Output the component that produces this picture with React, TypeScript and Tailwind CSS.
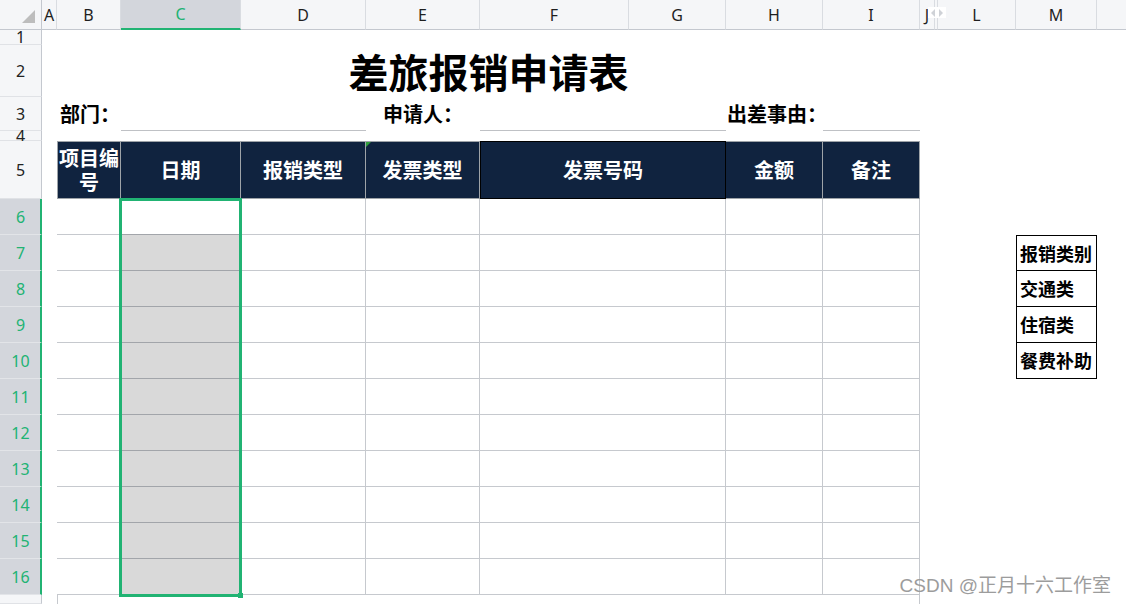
import clsx from "clsx";

const CJK = "font-['Noto_Sans_CJK_SC',sans-serif]";

const headerCols = [
  { l: "A", w: "w-[15px]" },
  { l: "B", w: "w-[64px]" },
  { l: "C", w: "w-[120px]", sel: true },
  { l: "D", w: "w-[125px]" },
  { l: "E", w: "w-[114px]" },
  { l: "F", w: "w-[149px]" },
  { l: "G", w: "w-[97px]" },
  { l: "H", w: "w-[97px]" },
  { l: "I", w: "w-[97px]" },
  { l: "J", w: "w-[15px]" },
  { l: "", w: "w-[3px]" },
  { l: "L", w: "w-[78px]" },
  { l: "M", w: "w-[81px]" },
];

const tableHead = [
  { t: "日期", w: "w-[120px]" },
  { t: "报销类型", w: "w-[125px]" },
  { t: "发票类型", w: "w-[114px]", mark: true },
];

const categories: Record<number, string> = {
  7: "报销类别",
  8: "交通类",
  9: "住宿类",
  10: "餐费补助",
};

function RowHead({ n, sel }: { n?: number; sel?: boolean }) {
  return (
    <div
      className={clsx(
        "w-[42px] shrink-0 flex items-center justify-center text-[16px] leading-none font-normal border-b font-['Noto_Sans',sans-serif]",
        sel
          ? "bg-[#d3d6dc] text-[#21b373] border-r-2 border-r-[#21b373] border-b-[#e2e4e8] pl-[1px]"
          : "bg-[#f5f6f8] text-[#222] border-r border-r-[#c4c8cf] border-b-[#e0e2e6]"
      )}
    >
      {n}
    </div>
  );
}

export default function App() {
  const dataRows = [6, 7, 8, 9, 10, 11, 12, 13, 14, 15, 16];

  return (
    <div className="relative w-[1126px] h-[604px] overflow-hidden bg-white font-['Noto_Sans','Noto_Sans_CJK_SC',sans-serif]">
      {/* column letters */}
      <div className="flex h-[30px] bg-[#f5f6f8]">
        <div className="w-[42px] shrink-0 flex items-end justify-end pr-[6px] pb-[6px] border-r border-b border-[#c4c8cf]">
          <svg width="13" height="13" viewBox="0 0 13 13">
            <polygon points="13,0 13,13 0,13" fill="#bdbdbd" />
          </svg>
        </div>
        {headerCols.map((c, i) => (
          <div
            key={i}
            className={clsx(
              c.w,
              "shrink-0 overflow-hidden flex items-center justify-center text-[16px] border-r border-r-[#d9dce1]",
              c.sel
                ? "bg-[#d3d6dc] text-[#21b373] border-b-2 border-b-[#21b373]"
                : "text-[#1f1f1f] border-b border-b-[#c4c8cf]"
            )}
          >
            {c.l}
          </div>
        ))}
        <div className="flex-1 border-b border-b-[#c4c8cf]" />
      </div>

      {/* row 1 */}
      <div className="flex h-[15px]">
        <RowHead n={1} />
      </div>

      {/* row 2: title */}
      <div className="flex h-[52px]">
        <RowHead n={2} />
        <div className="w-[15px] shrink-0" />
        <div className={clsx("w-[863px] shrink-0 flex items-center justify-center text-[40px] font-bold text-black", CJK)}>
          差旅报销申请表
        </div>
      </div>

      {/* row 3: labels */}
      <div className="flex h-[34px]">
        <RowHead n={3} />
        <div className="w-[15px] shrink-0" />
        <div className={clsx("flex text-[20px] font-bold text-black", CJK)}>
          <div className="w-[64px] shrink-0 flex items-center pl-[3px] whitespace-nowrap">部门：</div>
          <div className="w-[245px] shrink-0 border-b border-[#bfc1c5]" />
          <div className="w-[114px] shrink-0 flex items-center justify-center whitespace-nowrap">申请人：</div>
          <div className="w-[246px] shrink-0 border-b border-[#bfc1c5]" />
          <div className="w-[97px] shrink-0 flex items-center pl-[1px] whitespace-nowrap">出差事由：</div>
          <div className="w-[97px] shrink-0 border-b border-[#bfc1c5]" />
        </div>
      </div>

      {/* row 4 */}
      <div className="flex h-[10px]">
        <RowHead n={4} />
      </div>

      {/* row 5: table header */}
      <div className="flex h-[58px]">
        <RowHead n={5} />
        <div className="w-[15px] shrink-0" />
        <div className={clsx("flex text-[20px] font-bold text-white", CJK)}>
          <div className="w-[64px] shrink-0 bg-[#10233f] border border-[#9ea3a8] flex items-center justify-center text-center leading-[24px] px-[1px]">
            项目编号
          </div>
          {tableHead.map((h) => (
            <div
              key={h.t}
              className={clsx(
                h.w,
                "relative shrink-0 bg-[#10233f] border-y border-r border-[#9ea3a8] flex items-center justify-center"
              )}
            >
              {h.mark && (
                <svg className="absolute left-0 top-0" width="5" height="5" viewBox="0 0 5 5">
                  <polygon points="0,0 5,0 0,5" fill="#2e9e3a" />
                </svg>
              )}
              {h.t}
            </div>
          ))}
          <div className="w-[246px] shrink-0 bg-[#10233f] border border-black flex items-center justify-center">
            发票号码
          </div>
          <div className="w-[97px] shrink-0 bg-[#10233f] border-y border-r border-[#9ea3a8] flex items-center justify-center">
            金额
          </div>
          <div className="w-[97px] shrink-0 bg-[#10233f] border-y border-r border-[#9ea3a8] flex items-center justify-center">
            备注
          </div>
        </div>
      </div>

      {/* rows 6-16 */}
      {dataRows.map((n) => (
        <div key={n} className="flex h-[36px]">
          <RowHead n={n} sel />
          <div className="w-[15px] shrink-0" />
          <div className="w-[64px] shrink-0 border-b border-[#c6c9ce]" />
          <div
            className={clsx(
              "w-[120px] shrink-0 border-b border-r border-[#a2a5aa]",
              n === 6 ? "bg-white" : "bg-[#d9d9d9]"
            )}
          />
          <div className="w-[125px] shrink-0 border-b border-r border-[#c6c9ce]" />
          <div className="w-[114px] shrink-0 border-b border-r border-[#c6c9ce]" />
          <div className="w-[246px] shrink-0 border-b border-r border-[#c6c9ce]" />
          <div className="w-[97px] shrink-0 border-b border-r border-[#c6c9ce]" />
          <div className="w-[97px] shrink-0 border-b border-r border-[#c6c9ce]" />
          <div className="w-[18px] shrink-0" />
          <div className="w-[78px] shrink-0" />
          {categories[n] ? (
            <div
              className={clsx(
                "w-[81px] shrink-0 flex items-center pl-[3px] border-x border-b border-black text-[18px] font-bold text-black whitespace-nowrap",
                n === 7 && "border-t",
                CJK
              )}
            >
              {categories[n]}
            </div>
          ) : (
            <div className="w-[81px] shrink-0" />
          )}
        </div>
      ))}

      {/* row 17 */}
      <div className="flex h-[9px]">
        <RowHead />
        <div className="w-[15px] shrink-0" />
        <div className="w-[863px] shrink-0 border-x border-[#c6c9ce]" />
      </div>

      {/* hidden column marker */}
      <div className="absolute left-[928px] top-[7px] w-[18px] h-[11px] bg-white flex items-center justify-center">
        <svg width="14" height="8" viewBox="0 0 14 8">
          <polygon points="5,0 5,8 1,4" fill="#cfd2d7" />
          <polygon points="9,0 9,8 13,4" fill="#cfd2d7" />
        </svg>
      </div>

      {/* selection */}
      <div className="absolute left-[119px] top-[198px] w-[123px] h-[399px] border-[3px] border-[#21b373]" />
      <div className="absolute left-[238px] top-[593px] w-[5px] h-[5px] bg-[#21b373]" />

      {/* watermark */}
      <div className="absolute right-[15px] top-[572px] text-[19px] text-[#9c9c9c] font-['Liberation_Sans','Noto_Sans_CJK_SC',sans-serif] whitespace-nowrap">
        CSDN @正月十六工作室
      </div>
    </div>
  );
}
